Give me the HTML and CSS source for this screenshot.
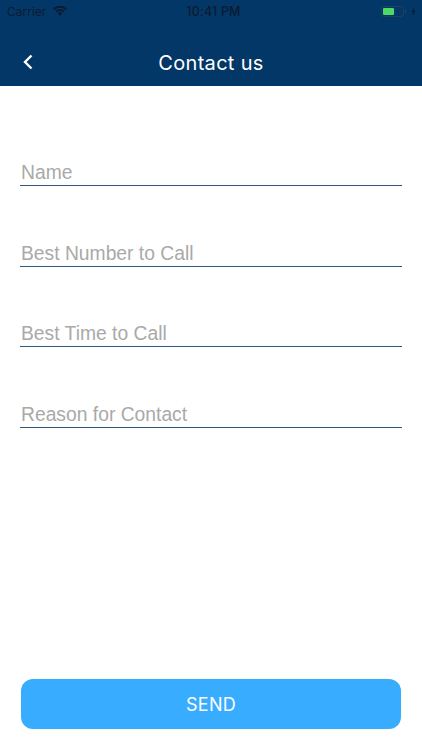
FILE: index.html
```html
<!DOCTYPE html>
<html lang="en">
<head>
<meta charset="utf-8">
<title>Contact us</title>
<link rel="stylesheet" href="styles.css">
</head>
<body>
<div class="screen">
  <header class="header">
    <div class="status">
      <div class="status-left">
        <span>Carrier</span>
        <svg class="wifi" viewBox="0 0 14 10" width="14" height="10"><path d="M7 10 4.600 7.300a3.400 3.400 0 0 1 4.800 0z"/><path d="M3.600 6.300 2.300 4.900a6.800 6.800 0 0 1 9.400 0l-1.300 1.400a4.900 4.900 0 0 0-6.800 0z"/><path d="M1.400 4 0 2.600a10 10 0 0 1 14 0L12.600 4a8 8 0 0 0-11.200 0z"/></svg>
      </div>
      <span class="clock">10:41 PM</span>
      <div class="status-right">
        <span class="battery"><span class="battery-fill"></span></span>
        <span class="battery-nub"></span>
        <svg class="bolt" viewBox="0 0 6 10" width="5" height="9"><path d="M3.800 0 .4 5.600h2.100L1.900 10l3.600-6H3.300z"/></svg>
      </div>
    </div>
    <div class="nav">
      <svg class="back" viewBox="0 0 12 18" width="12" height="18"><path d="M9.500 2.500 3 9l6.500 6.500"/></svg>
      <h1 class="title">Contact us</h1>
    </div>
  </header>
  <main class="form">
    <div class="field">Name</div>
    <div class="field">Best Number to Call</div>
    <div class="field">Best Time to Call</div>
    <div class="field">Reason for Contact</div>
  </main>
  <button class="send">SEND</button>
</div>
</body>
</html>
```
FILE: styles.css
```css
* { box-sizing: border-box; }
html, body { margin: 0; padding: 0; background: #fff; }
.screen {
  width: 422px;
  height: 750px;
  display: flex;
  flex-direction: column;
  overflow: hidden;
  font-family: Inter, "Liberation Sans", sans-serif;
}
.header { background: #033768; height: 86px; flex: none; }
.status {
  height: 22px;
  padding: 0 6px 0 7px;
  display: grid;
  grid-template-columns: 1fr auto 1fr;
  align-items: center;
  font-size: 12px;
  color: #0b1b30;
}
.status-left { display: flex; align-items: center; gap: 7px; }
.wifi { fill: #0b1b30; }
.clock { font-weight: 500; font-size: 12.500px; letter-spacing: 0.200px; margin-left: 4px; }
.status-right { display: flex; align-items: center; justify-content: flex-end; }
.battery {
  width: 23px;
  height: 11px;
  border: 1px solid #1d3f63;
  border-radius: 3px;
  padding: 1px;
  display: block;
}
.battery-fill { display: block; width: 11px; height: 100%; background: #4cd964; border-radius: 1px; }
.battery-nub { width: 1px; height: 4px; margin: 0 5px 0 1px; background: #1d3f63; }
.bolt { fill: #0b1b30; }
.nav {
  position: relative;
  height: 64px;
  padding-top: 17px;
  display: flex;
  align-items: center;
  justify-content: center;
}
.back {
  position: absolute;
  left: 22px;
  top: 31px;
  fill: none;
  stroke: #fff;
  stroke-width: 2.400;
}
.title { margin: 0; font-size: 20px; font-weight: 400; color: #fff; letter-spacing: 0.300px; }
.form {
  flex: 1;
  padding: 60px 20px 0;
  display: flex;
  flex-direction: column;
  gap: 40.670px;
}
.field {
  height: 40px;
  padding-top: 15px;
  border-bottom: 1.500px solid #2f5785;
  color: #a9a9a9;
  font-family: "Liberation Sans", Arial, sans-serif;
  font-size: 19.300px;
  line-height: 23px;
  padding-left: 1px;
}
.send {
  flex: none;
  margin: 0 21px 21px 21px;
  height: 50px;
  border: 0;
  border-radius: 12px;
  background: #38adff;
  color: #fff;
  font-family: Inter, "Liberation Sans", sans-serif;
  font-size: 18px;
  font-weight: 400;
  letter-spacing: 0.300px;
}
```
